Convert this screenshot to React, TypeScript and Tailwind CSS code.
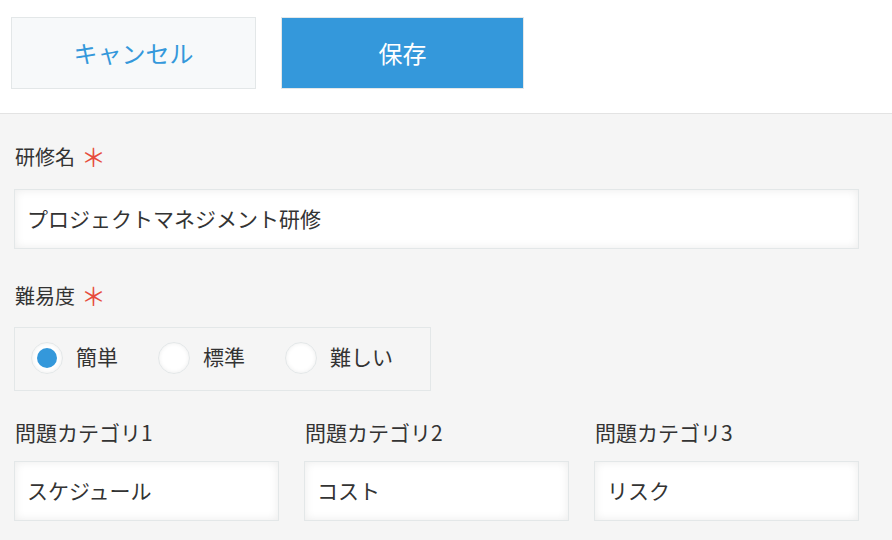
import React from "react";

const font = { fontFamily: '"Noto Sans CJK JP", "Noto Sans", sans-serif' };

function Radio({ label, checked }: { label: string; checked?: boolean }) {
  return (
    <div className="flex items-center mr-[40px] shrink-0">
      <div className="w-[32px] h-[32px] shrink-0 rounded-full bg-white border border-[#e3e7e8] shadow-[inset_0_0_4px_#ececec] flex items-center justify-center -mt-[3px]">
        {checked && <div className="w-[20px] h-[20px] rounded-full bg-[#3498db]" />}
      </div>
      <span className="ml-[13px] text-[21px] leading-[26px] text-[#333] -mt-[6px] whitespace-nowrap">{label}</span>
    </div>
  );
}

function Input({ value, className }: { value: string; className?: string }) {
  return (
    <div
      className={
        "h-[60px] bg-white border border-[#e3e7e8] shadow-[inset_0_0_10px_#ebebeb] flex items-center pl-[12px] text-[21px] text-[#333] whitespace-nowrap " +
        (className ?? "")
      }
    >
      {value}
    </div>
  );
}

function Label({ text, required, size }: { text: string; required?: boolean; size?: string }) {
  return (
    <div className={"flex items-center h-[26px] leading-[26px] text-[#333] pl-[1px] whitespace-nowrap " + (size ?? "text-[20px]")}>
      <span>{text}</span>
      {required && (
        <span className="ml-[6px] text-[#e74c3c] text-[25px] leading-[26px] -mt-[2px]">＊</span>
      )}
    </div>
  );
}

export default function App() {
  return (
    <div className="w-[892px] h-[540px] overflow-hidden bg-[#f5f5f5]" style={font}>
      <div className="h-[114px] bg-white border-b border-[#e3e3e3] flex pt-[17px] pl-[11px] gap-[25px]">
        <button className="w-[245px] h-[72px] bg-[#f7f9fa] border border-[#e3e7e8] text-[#3498db] text-[24px]">
          キャンセル
        </button>
        <button className="w-[243px] h-[72px] bg-[#3498db] border border-[#e3e7e8] text-white text-[24px]">
          保存
        </button>
      </div>
      <div className="pl-[14px] pr-[33px]">
        <div className="pt-[30px]">
          <Label text="研修名" required />
        </div>
        <Input value="プロジェクトマネジメント研修" className="mt-[19px]" />
        <div className="mt-[34px]">
          <Label text="難易度" required />
        </div>
        <div className="mt-[18px] w-[417px] h-[64px] border border-[#e3e7e8] flex items-center pl-[16px]">
          <Radio label="簡単" checked />
          <Radio label="標準" />
          <Radio label="難しい" />
        </div>
        <div className="mt-[28px] grid grid-cols-3 gap-x-[25px]">
          <Label text="問題カテゴリ1" size="text-[21px]" />
          <Label text="問題カテゴリ2" size="text-[21px]" />
          <Label text="問題カテゴリ3" size="text-[21px]" />
          <Input value="スケジュール" className="mt-[16px]" />
          <Input value="コスト" className="mt-[16px]" />
          <Input value="リスク" className="mt-[16px]" />
        </div>
      </div>
    </div>
  );
}
